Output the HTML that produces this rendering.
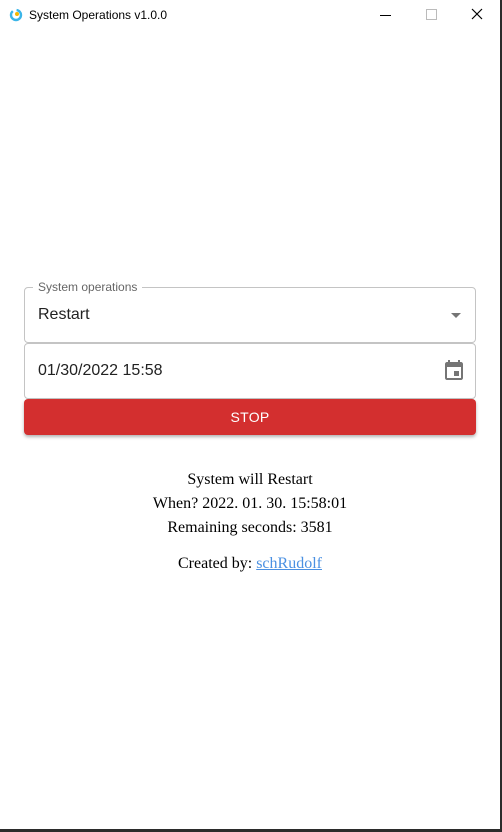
<!DOCTYPE html>
<html><head><style>
body{margin:0;width:502px;height:832px;background:#fff;position:relative;overflow:hidden;font-family:"Liberation Sans",sans-serif}
.b{position:absolute}
</style></head><body>
<div class="b" style="left:500px;top:0;width:2px;height:832px;background:#2b2b2b"></div>
<div class="b" style="left:0;top:829px;width:502px;height:3px;background:#2b2b2b"></div>
<svg class="b" style="left:9px;top:8px" width="14" height="14" viewBox="0 0 14 14"><circle cx="7" cy="7" r="5" fill="none" stroke="#3bb5e8" stroke-width="2.4" stroke-dasharray="20 4"/><circle cx="8" cy="6" r="2" fill="#f5b700"/></svg>
<div class="b" style="left:29px;top:8px;font-size:12px;color:#000">System Operations v1.0.0</div>
<div class="b" style="left:380px;top:15px;width:11px;height:1px;background:#000"></div>
<div class="b" style="left:426px;top:9px;width:9px;height:9px;border:1px solid #bbb"></div>
<svg class="b" style="left:471px;top:8px" width="12" height="12"><path d="M1 1L11 11M11 1L1 11" stroke="#000" stroke-width="1.2"/></svg>

<div class="b" style="left:24px;top:287px;width:450px;height:54px;border:1px solid #c4c4c4;border-radius:4px"></div>
<div class="b" style="left:33px;top:280px;padding:0 5px;background:#fff;font-size:12px;color:#666">System operations</div>
<div class="b" style="left:38px;top:306px;font-size:16px;color:#222">Restart</div>
<div class="b" style="left:451px;top:313px;width:0;height:0;border-left:5px solid transparent;border-right:5px solid transparent;border-top:5px solid #757575"></div>

<div class="b" style="left:24px;top:343px;width:450px;height:54px;border:1px solid #c4c4c4;border-radius:4px"></div>
<div class="b" style="left:38px;top:362px;font-size:16px;color:#222">01/30/2022 15:58</div>
<svg class="b" style="left:442px;top:358px" width="24" height="24" viewBox="0 0 24 24"><path fill="#757575" d="M19 4h-1V2h-2v2H8V2H6v2H5c-1.1 0-2 .9-2 2v14c0 1.1.9 2 2 2h14c1.1 0 2-.9 2-2V6c0-1.1-.9-2-2-2zm0 16H5V9h14v11zM12 13h5v5h-5z"/></svg>

<div class="b" style="left:24px;top:399px;width:452px;height:36px;background:#d32f2f;border-radius:4px;box-shadow:0 2px 3px rgba(0,0,0,.3);color:#fff;font-size:14px;text-align:center;line-height:36px;letter-spacing:.3px">STOP</div>

<div class="b" style="left:0;width:500px;top:468px;text-align:center;font-family:'Liberation Serif',serif;font-size:16px;line-height:24px;color:#000">System will Restart<br>When? 2022. 01. 30. 15:58:01<br>Remaining seconds: 3581</div>
<div class="b" style="left:0;width:500px;top:554px;text-align:center;font-family:'Liberation Serif',serif;font-size:16px;line-height:20px;color:#000">Created by: <span style="color:#4a90e2;text-decoration:underline">schRudolf</span></div>
</body></html>
